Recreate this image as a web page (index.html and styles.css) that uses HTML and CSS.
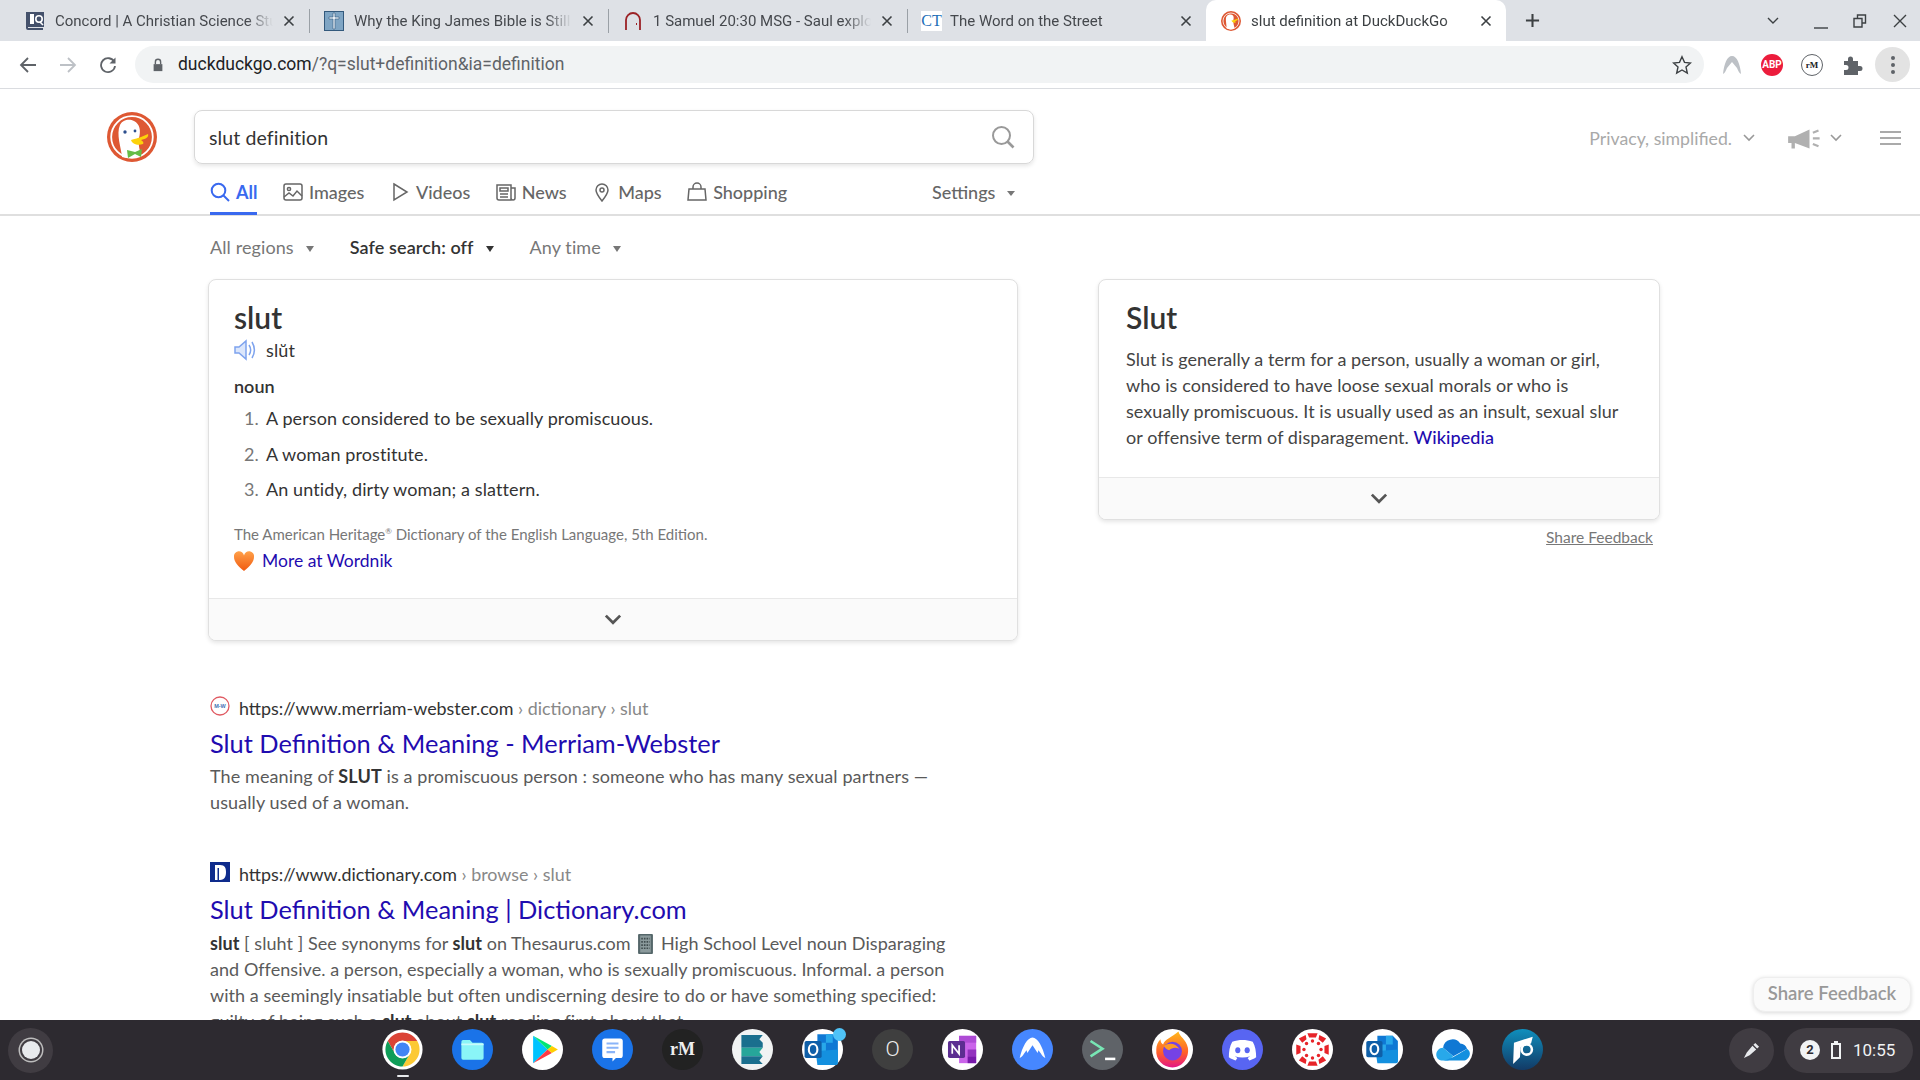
FILE: index.html
```html
<!DOCTYPE html>
<html lang="en">
<head>
<meta charset="utf-8">
<title>slut definition at DuckDuckGo</title>
<link rel="stylesheet" href="styles.css">
</head>
<body>
<div class="screen">
  <header class="chrome">
    <div class="tabstrip">
      <div class="tab">
        <svg class="favicon" viewBox="0 0 20 20"><path d="M1 1h2v16h15v2H3a2 2 0 0 1-2-2z" fill="#44516b"/><rect x="3" y="1" width="16" height="15" fill="#44516b"/><rect x="5" y="3" width="4" height="10" fill="#fff"/><circle cx="14" cy="8" r="3.200" fill="none" stroke="#fff" stroke-width="1.600"/><path d="M15 11l3 3" stroke="#fff" stroke-width="1.600"/></svg>
        <span class="tab-title">Concord | A Christian Science Study Tool</span>
        <svg class="tab-close" viewBox="0 0 12 12"><path d="M1.500 1.500l9 9M10.500 1.500l-9 9"/></svg>
      </div>
      <div class="tab sep">
        <svg class="favicon" viewBox="0 0 20 20"><rect x="0.500" y="0.500" width="19" height="19" fill="#7fa5c4" stroke="#33597c"/><path d="M9 2h2v4h4v2h-4v10H9V8H5V6h4z" fill="#e6eef5" stroke="#33597c" stroke-width=".6"/></svg>
        <span class="tab-title">Why the King James Bible is Still the Best</span>
        <svg class="tab-close" viewBox="0 0 12 12"><path d="M1.500 1.500l9 9M10.500 1.500l-9 9"/></svg>
      </div>
      <div class="tab sep">
        <svg class="favicon" viewBox="0 0 20 20"><path d="M3 19V9a7 7 0 0 1 14 0v10" fill="none" stroke="#9b2226" stroke-width="1.800"/><path d="M13.500 12v2" stroke="#9b2226"/></svg>
        <span class="tab-title">1 Samuel 20:30 MSG - Saul exploded at Jonathan</span>
        <svg class="tab-close" viewBox="0 0 12 12"><path d="M1.500 1.500l9 9M10.500 1.500l-9 9"/></svg>
      </div>
      <div class="tab sep">
        <span class="favicon ct">CT</span>
        <span class="tab-title">The Word on the Street</span>
        <svg class="tab-close" viewBox="0 0 12 12"><path d="M1.500 1.500l9 9M10.500 1.500l-9 9"/></svg>
      </div>
      <div class="tab active">
        <svg class="favicon" viewBox="0 0 50 50"><circle cx="25" cy="25" r="25" fill="#de5833"/><circle cx="25" cy="25" r="20" fill="none" stroke="#fff" stroke-width="2"/><path d="M14 44C14 30 10 20 14 13c3-5 12-6 16-2 2 3 2 7 1 11-1 8 2 16 3 21a22 22 0 0 1-20 1z" fill="#fff"/><path d="M26 24c6-1 10-2 16-5 1 3-2 6-7 7 2 1 3 3 2 3-4 1-9 0-11-5z" fill="#fdd20a"/></svg>
        <span class="tab-title">slut definition at DuckDuckGo</span>
        <svg class="tab-close" viewBox="0 0 12 12"><path d="M1.500 1.500l9 9M10.500 1.500l-9 9"/></svg>
      </div>
      <svg class="newtab" viewBox="0 0 16 16"><path d="M8 1v14M1 8h14"/></svg>
      <div class="winctl">
        <svg class="win-ico win-chev" viewBox="0 0 12 8"><path d="M1 1l5 5 5-5"/></svg>
        <svg class="win-ico win-min" viewBox="0 0 14 14"><path d="M0 12h14"/></svg>
        <svg class="win-ico win-max" viewBox="0 0 14 14"><path d="M4.500 4V1h8v8h-3M1 4.500h8V13H1z"/></svg>
        <svg class="win-ico win-x" viewBox="0 0 14 14"><path d="M1 1l12 12M13 1L1 13"/></svg>
      </div>
    </div>
    <div class="toolbar">
      <svg class="nav-ico" viewBox="0 0 18 18"><path d="M17 9H2M9 2L2 9l7 7"/></svg>
      <svg class="nav-ico disabled" viewBox="0 0 18 18"><path d="M1 9h15M9 2l7 7-7 7"/></svg>
      <svg class="nav-ico" viewBox="0 0 18 18"><path d="M15.300 6A7 7 0 1 0 16 10"/><path class="solid" d="M16.500 1.500v6h-6z"/></svg>
      <div class="omnibox">
        <svg class="lock" viewBox="0 0 12 16"><path d="M1 7h10v8H1z" fill="#5f6368"/><path d="M3 7V4.500a3 3 0 0 1 6 0V7" fill="none" stroke="#5f6368" stroke-width="1.600"/></svg>
        <span class="url"><span class="host">duckduckgo.com</span>/?q=slut+definition&amp;ia=definition</span>
        <svg class="star" viewBox="0 0 20 20"><path d="M10 1.800l2.500 5.600 6 .6-4.500 4 1.300 6L10 15l-5.300 3 1.300-6-4.500-4 6-.6z"/></svg>
      </div>
      <div class="extensions">
        <svg class="ext" viewBox="0 0 22 22"><path d="M2 20C3 10 6 2 11 2s8 8 9 18c-2-1-3-4-4-6l-5-6-5 6c-1 2-2 5-4 6z" fill="#bdc1c6"/></svg>
        <span class="ext abp">ABP</span>
        <span class="ext rm-badge">rM</span>
        <svg class="ext" viewBox="0 0 22 22"><path d="M3 7h4V5a2.500 2.500 0 0 1 5 0v2h5v5h2a2.500 2.500 0 0 1 0 5h-2v4H3v-5h2a2.500 2.500 0 0 0 0-5H3z" fill="#5f6368"/></svg>
        <span class="kebab"><i></i><i></i><i></i></span>
      </div>
    </div>
  </header>

  <main class="page">
    <div class="search-head">
      <svg class="logo" viewBox="0 0 50 50"><circle cx="25" cy="25" r="25" fill="#de5833"/><circle cx="25" cy="25" r="20.800" fill="none" stroke="#fff" stroke-width="1.800"/><path d="M15 45C14 35 9 22 13 13c3-6 10-6 14-4 6 3 7 10 5 17-1 7 1 13 2 17-6 3-13 4-19 2z" fill="#fff"/><circle cx="18" cy="20" r="1.700" fill="#2d4f8e"/><circle cx="28" cy="19" r="1.400" fill="#2d4f8e"/><path d="M24 28c4-1 11-3 17-6 1 3-2 5-7 6 2 1 3 3 2 4-5 2-11 0-12-4z" fill="#fdd20a"/><path d="M20 38l8 2 7-3-1 8-6-3-7 4z" fill="#65bc46"/></svg>
      <div class="searchbox">
        <span class="query">slut definition</span>
        <svg class="search-ico" viewBox="0 0 24 24"><circle cx="10.500" cy="10.500" r="8.500"/><path d="M16.500 16.500l6 6" stroke-width="2.600"/></svg>
      </div>
      <div class="head-right">
        <span class="tagline">Privacy, simplified.</span>
        <svg class="mini-chev" viewBox="0 0 12 8"><path d="M1 1l5 5 5-5"/></svg>
        <svg class="megaphone" viewBox="0 0 32 20"><path d="M1 7h6l13-6v17L7 13v5H4v-5H1z" fill="#b0b0b0"/><path d="M23 4l5-2M23 9h6M23 14l5 2" stroke="#b0b0b0" stroke-width="2"/></svg>
        <svg class="mini-chev" viewBox="0 0 12 8"><path d="M1 1l5 5 5-5"/></svg>
        <span class="burger"><i></i><i></i><i></i></span>
      </div>
    </div>

    <nav class="tabs-nav">
      <a class="nav-item current">
        <svg class="nav-svg" viewBox="0 0 20 20"><circle cx="8.500" cy="8.500" r="6.800"/><path d="M13.500 13.500l5.500 5.500"/></svg>All
      </a>
      <a class="nav-item">
        <svg class="nav-svg" viewBox="0 0 20 20"><rect x="1" y="2" width="18" height="16" rx="2"/><circle cx="6" cy="7" r="1.600"/><path d="M1 15l5-4 4 3 4-5 5 5"/></svg>Images
      </a>
      <a class="nav-item">
        <svg class="nav-svg" viewBox="0 0 20 20"><path d="M4 2l13 8-13 8z"/></svg>Videos
      </a>
      <a class="nav-item">
        <svg class="nav-svg" viewBox="0 0 20 20"><path d="M1 3h14v15H3a2 2 0 0 1-2-2zM15 6h4v10a2 2 0 0 1-4 0M4 6h8v3H4zM4 12h8M4 15h8"/></svg>News
      </a>
      <a class="nav-item">
        <svg class="nav-svg" viewBox="0 0 20 20"><path d="M10 19C6 14 4 11 4 8a6 6 0 0 1 12 0c0 3-2 6-6 11z"/><circle cx="10" cy="8" r="2"/></svg>Maps
      </a>
      <a class="nav-item">
        <svg class="nav-svg" viewBox="0 0 20 20"><path d="M2 7h16l1 11H1zM6 7V5a4 4 0 0 1 8 0v2"/></svg>Shopping
      </a>
      <a class="nav-item settings">Settings<span class="caret small"></span></a>
    </nav>

    <div class="filters">
      <span class="filter">All regions<span class="caret"></span></span>
      <span class="filter strong">Safe search: off<span class="caret dark"></span></span>
      <span class="filter">Any time<span class="caret"></span></span>
    </div>

    <div class="columns">
      <div class="col-main">
        <section class="card dict-card">
          <div class="card-body dict-body">
            <h1 class="card-title">slut</h1>
            <div class="pron">
              <svg class="speaker" viewBox="0 0 22 22"><path d="M1 8h4l7-6v18l-7-6H1z" fill="#dbe6fb" stroke="#7ea3ee" stroke-width="1.500"/><path d="M15 6c2 3 2 7 0 10M18 3c3 5 3 11 0 16" fill="none" stroke="#7ea3ee" stroke-width="1.500"/></svg>
              <span>slŭt</span>
            </div>
            <div class="pos">noun</div>
            <ol class="defs">
              <li><span class="num">1.</span><span>A person considered to be sexually promiscuous.</span></li>
              <li><span class="num">2.</span><span>A woman prostitute.</span></li>
              <li><span class="num">3.</span><span>An untidy, dirty woman; a slattern.</span></li>
            </ol>
            <p class="attrib">The American Heritage<sup>®</sup> Dictionary of the English Language, 5th Edition.</p>
            <div class="more">
              <svg class="heart" viewBox="0 0 20 20"><defs><linearGradient id="hg" x1="0" y1="0" x2="0" y2="1"><stop offset="0" stop-color="#ffa14a"/><stop offset="1" stop-color="#f05a10"/></linearGradient></defs><path d="M10 20C4 15 0 11 0 6a5 5 0 0 1 10-1.500A5 5 0 0 1 20 6c0 5-4 9-10 14z" fill="url(#hg)"/></svg>
              <a class="link">More at Wordnik</a>
            </div>
          </div>
          <div class="card-foot"><svg class="foot-chev" viewBox="0 0 16 10"><path d="M1.500 1.500L8 8l6.500-6.500"/></svg></div>
        </section>

        <article class="result first">
          <div class="res-url">
            <svg class="res-fav" viewBox="0 0 20 20"><circle cx="10" cy="10" r="9" fill="#fff" stroke="#e05a62" stroke-width="1.300"/><text x="10" y="12" class="mw-text">M-W</text></svg>
            <span class="url-host">https://www.merriam-webster.com</span><span class="crumbs"> › dictionary › slut</span>
          </div>
          <a class="res-title">Slut Definition &amp; Meaning - Merriam-Webster</a>
          <p class="snippet">The meaning of <b>SLUT</b> is a promiscuous person : someone who has many sexual partners — usually used of a woman.</p>
        </article>

        <article class="result">
          <div class="res-url">
            <svg class="res-fav" viewBox="0 0 20 20"><rect width="20" height="20" fill="#0e2b8c"/><path d="M5 3h5c5 0 6 3 6 7s-1 8-6 8H9V6H5z" fill="#fff"/><rect x="5" y="3" width="2.500" height="15" fill="#fff"/></svg>
            <span class="url-host">https://www.dictionary.com</span><span class="crumbs"> › browse › slut</span>
          </div>
          <a class="res-title">Slut Definition &amp; Meaning | Dictionary.com</a>
          <p class="snippet tight"><b>slut</b> [ sluht ] See synonyms for <b>slut</b> on Thesaurus.com <svg class="notebook" viewBox="0 0 16 20"><rect x="1" y="0.500" width="14" height="19" rx="1" fill="#55676a"/><rect x="3" y="2" width="10" height="16" fill="#8b9a9c"/><path d="M4 5h8M4 8h8M4 11h8M4 14h8" stroke="#3f4b4d" stroke-width="1.600" stroke-dasharray="1.500 1"/></svg> High School Level noun Disparaging and Offensive. a person, especially a woman, who is sexually promiscuous. Informal. a person with a seemingly insatiable but often undiscerning desire to do or have something specified: guilty of being such a <b>slut</b> about <b>slut</b> reading first about that.</p>
        </article>
      </div>

      <aside class="col-side">
        <section class="card wiki-card">
          <div class="card-body wiki-body">
            <h2 class="card-title">Slut</h2>
            <p class="wiki-text">Slut is generally a term for a person, usually a woman or girl, who is considered to have loose sexual morals or who is sexually promiscuous. It is usually used as an insult, sexual slur or offensive term of disparagement. <a class="link medium">Wikipedia</a></p>
          </div>
          <div class="card-foot"><svg class="foot-chev" viewBox="0 0 16 10"><path d="M1.500 1.500L8 8l6.500-6.500"/></svg></div>
        </section>
        <a class="share-link">Share Feedback</a>
      </aside>
    </div>

    <button class="share-btn">Share Feedback</button>
  </main>

  <footer class="shelf">
    <span class="launcher"><i></i></span>
    <div class="apps">
      <span class="app-wrap running">
        <svg class="app" viewBox="0 0 48 48"><circle cx="24" cy="24" r="23.500" fill="#fff"/><path d="M24 14h17.300A20 20 0 0 0 6.700 14l8.640 15A10 10 0 0 1 24 14z" fill="#db4437"/><path d="M41.300 14H24a10 10 0 0 1 8.660 15L24 44a20 20 0 0 0 17.300-30z" fill="#fcc934"/><path d="M6.700 14l8.640 15a10 10 0 0 0 17.320 0L24 44A20 20 0 0 1 6.700 14z" fill="#0f9d58"/><circle cx="24" cy="24" r="10.500" fill="#fff"/><circle cx="24" cy="24" r="8.300" fill="#4285f4"/></svg>
      </span>
      <svg class="app" viewBox="0 0 48 48"><circle cx="24" cy="24" r="24" fill="#1a73e8"/><path d="M11 15a2 2 0 0 1 2-2h8l3 3h11a2 2 0 0 1 2 2v16a2 2 0 0 1-2 2H13a2 2 0 0 1-2-2z" fill="#8af5f7"/><path d="M11 17h26v2H11z" fill="#c8fbfb"/></svg>
      <svg class="app" viewBox="0 0 48 48"><circle cx="24" cy="24" r="24" fill="#fff"/><path d="M13 8l17 16-17 16z" fill="#00c3ff"/><path d="M13 8l22 12-5 4z" fill="#00e676"/><path d="M13 40l22-12-5-4z" fill="#ff3a44"/><path d="M35 20l7 4-7 4-5-4z" fill="#ffce00"/></svg>
      <svg class="app" viewBox="0 0 48 48"><circle cx="24" cy="24" r="24" fill="#1a73e8"/><path d="M12 14a3 3 0 0 1 3-3h18a3 3 0 0 1 3 3v17a3 3 0 0 1-3 3h-5l-4 4v-4h-9a3 3 0 0 1-3-3z" fill="#fff"/><path d="M17 17h14M17 22h14M17 27h10" stroke="#8ab4f8" stroke-width="2.500"/></svg>
      <span class="app app-rm">rM</span>
      <svg class="app" viewBox="0 0 48 48"><circle cx="24" cy="24" r="24" fill="#f1f3f3"/><path d="M11 7h25l-4 5 4 4v6H11z" fill="#1a6f8e"/><path d="M11 22h25l-4 5 4 5H11z" fill="#26a69a"/><path d="M11 32h25l-4 5 4 4H11z" fill="#1a6f8e"/></svg>
      <span class="app-wrap">
        <svg class="app" viewBox="0 0 48 48"><circle cx="24" cy="24" r="24" fill="#fff"/><path d="M18 6h18l6 6v26H18z" fill="#0f78d4"/><path d="M28 6h8v10h-8zM18 16h10v10H18z" fill="#28a8ea"/><path d="M16 26l26-2v16a2 2 0 0 1-2 2H18z" fill="#1490df"/><rect x="3" y="14" width="20" height="20" rx="2" fill="#0f5fa8"/><ellipse cx="13" cy="24" rx="5" ry="6.500" fill="none" stroke="#fff" stroke-width="2.500"/></svg>
        <i class="notify"></i>
      </span>
      <span class="app app-o">O</span>
      <svg class="app" viewBox="0 0 48 48"><circle cx="24" cy="24" r="24" fill="#fff"/><path d="M20 8h20v32H20z" fill="#ca64ea"/><path d="M20 8h20v8H20z" fill="#ae4bd5"/><path d="M30 24h10v8H30z" fill="#9332bf"/><path d="M30 32h10v8H30z" fill="#7719aa"/><rect x="7" y="14" width="20" height="20" rx="2" fill="#5c2d91"/><path d="M12 29V19l8 10V19" fill="none" stroke="#fff" stroke-width="2"/></svg>
      <svg class="app" viewBox="0 0 48 48"><circle cx="24" cy="24" r="24" fill="#4687ff"/><path d="M9 34C12 21 18 10 24 10s12 11 15 24c-2-1-4-3-5-5l-3-4-1 3-6-9-6 9-1-3-3 4c-1 2-3 4-5 5z" fill="#fff"/></svg>
      <svg class="app" viewBox="0 0 48 48"><circle cx="24" cy="24" r="24" fill="#5f6368"/><path d="M10 14l14 9-14 9" fill="none" stroke="#78e6b4" stroke-width="3"/><path d="M27 35h12" stroke="#fff" stroke-width="3"/></svg>
      <svg class="app" viewBox="0 0 48 48"><defs><linearGradient id="ffg" x1="0" y1="0" x2="0" y2="1"><stop offset="0" stop-color="#ffb81c"/><stop offset="0.600" stop-color="#ff5d2a"/><stop offset="1" stop-color="#e31587"/></linearGradient></defs><circle cx="24" cy="24" r="24" fill="#fff"/><path d="M31 3c1 6 9 9 11 19 2 12-7 23-18 23S4 36 5 24c0-5 2-9 5-12 0 3 1 5 3 6 2-6 10-8 18-15z" fill="url(#ffg)"/><circle cx="24" cy="26" r="11" fill="#7542e5"/><path d="M14 20c6-5 14-3 18 3-5-2-9-1-12 2-3-1-5-3-6-5z" fill="#ff9a26"/></svg>
      <svg class="app" viewBox="0 0 48 48"><circle cx="24" cy="24" r="24" fill="#5865f2"/><path d="M12 15c8-3 16-3 24 0 3 5 4 12 4 18-3 2-6 3-8 4l-2-3 3-2c-6 2-12 2-18 0l3 2-2 3c-2-1-5-2-8-4 0-6 1-13 4-18z" fill="#fff"/><ellipse cx="18.500" cy="25" rx="3" ry="3.500" fill="#5865f2"/><ellipse cx="29.500" cy="25" rx="3" ry="3.500" fill="#5865f2"/></svg>
      <svg class="app canvas" viewBox="0 0 48 48"><circle cx="24" cy="24" r="24" fill="#fff"/><g fill="#e72429"><circle cx="24" cy="14" r="2"/><circle cx="24" cy="34" r="2"/><circle cx="14" cy="24" r="2"/><circle cx="34" cy="24" r="2"/><circle cx="17" cy="17" r="2"/><circle cx="31" cy="17" r="2"/><circle cx="17" cy="31" r="2"/><circle cx="31" cy="31" r="2"/><path d="M18 5h12l-2 5h-8zM18 43h12l-2-5h-8zM5 18v12l5-2v-8zM43 18v12l-5-2v-8zM8 11l8-4 1 5-5 4zM40 11l-8-4-1 5 5 4zM8 37l8 4 1-5-5-4zM40 37l-8 4-1-5 5-4z"/></g></svg>
      <svg class="app" viewBox="0 0 48 48"><circle cx="24" cy="24" r="24" fill="#fff"/><path d="M18 8h18l6 6v24H18z" fill="#0f78d4"/><path d="M28 8h8v10h-8zM18 18h10v8H18z" fill="#28a8ea"/><path d="M16 26l26-2v14a2 2 0 0 1-2 2H18z" fill="#1490df"/><rect x="5" y="14" width="19" height="19" rx="2" fill="#0f5fa8"/><ellipse cx="14.500" cy="23.500" rx="4.500" ry="6" fill="none" stroke="#fff" stroke-width="2.500"/></svg>
      <svg class="app" viewBox="0 0 48 48"><circle cx="24" cy="24" r="24" fill="#fff"/><path d="M13 22a11 11 0 0 1 20-5 9 9 0 0 1 8 6l-16 9z" fill="#0f78d4"/><path d="M13 22c-5 0-8 4-8 8 0 4 3 7 8 7h6l6-5z" fill="#28a8ea"/><path d="M41 23c3 2 4 5 3 8s-4 6-7 6H13c12-3 20-9 28-14z" fill="#1490df"/></svg>
      <svg class="app" viewBox="0 0 48 48"><defs><linearGradient id="lg" x1="0" y1="0" x2="0" y2="1"><stop offset="0" stop-color="#0f8fbd"/><stop offset="1" stop-color="#123a66"/></linearGradient></defs><circle cx="24" cy="24" r="24" fill="url(#lg)"/><path d="M13 41l1-25 22-7-2 8-12 4-1 12z" fill="#fff"/><circle cx="29" cy="24" r="6" fill="none" stroke="#fff" stroke-width="3"/></svg>
    </div>
    <div class="status">
      <span class="pen-pill"><svg class="pen" viewBox="0 0 18 18"><path d="M1 17l3-6 6-7 4 4-7 6zM11 3l2-2 4 4-2 2z" fill="#e8eaed"/></svg></span>
      <span class="tray">
        <span class="badge">2</span>
        <svg class="battery" viewBox="0 0 10 18"><path d="M3 0h4v2h3v16H0V2h3zM2 4v12h6V4z" fill="#f1f3f4"/></svg>
        <span class="clock">10:55</span>
      </span>
    </div>
  </footer>
</div>
</body>
</html>
```

FILE: styles.css
```css
* { box-sizing: border-box; }
html, body { margin: 0; height: 100%; background: #fff; }
.screen { width: 1920px; height: 1080px; display: flex; flex-direction: column; overflow: hidden; font-family: "Lato", "Liberation Sans", sans-serif; color: #333; }

/* browser chrome */
.chrome { flex: 0 0 89px; display: flex; flex-direction: column; font-family: Roboto, "Liberation Sans", sans-serif; border-bottom: 1px solid #dadce0; }
.tabstrip { height: 41px; background: #dee1e6; display: flex; align-items: center; padding-left: 10px; }
.tab { width: 299px; height: 41px; display: flex; align-items: center; padding: 0 14px 0 15px; gap: 10px; position: relative; color: #45484d; font-size: 15px; }
.tab.sep::before { content: ""; position: absolute; left: 0; top: 9px; height: 24px; width: 1px; background: #9aa0a6; }
.tab.active { background: #fff; border-radius: 10px 10px 0 0; color: #3c4043; width: 300px; }
.favicon { width: 20px; height: 20px; flex: none; }
.ct { display: block; background: #fff; color: #1e6fb8; font: 400 16px/20px "Liberation Serif", serif; text-align: center; margin: 0 -2px 0 -1px; width: 21px; }
.tab-title { flex: 1; white-space: nowrap; overflow: hidden; -webkit-mask-image: linear-gradient(90deg, #000 88%, transparent 100%); mask-image: linear-gradient(90deg, #000 88%, transparent 100%); }
.tab-close { width: 12px; height: 12px; flex: none; stroke: #3c4043; stroke-width: 1.600; fill: none; }
.newtab { width: 15px; height: 15px; margin-left: 19px; stroke: #3c4043; stroke-width: 2.200; fill: none; flex: none; }
.winctl { margin-left: auto; display: flex; align-items: center; padding-right: 13px; }
.win-ico { stroke: #3c4043; fill: none; stroke-width: 1.400; flex: none; }
.win-chev { width: 12px; height: 8px; margin-right: 35px; }
.win-min { width: 14px; height: 14px; margin-right: 25px; margin-top: 4px; }
.win-max { width: 14px; height: 14px; margin-right: 26px; }
.win-x { width: 14px; height: 14px; }

.toolbar { height: 47px; background: #fff; display: flex; align-items: center; padding: 0 10px 0 19px; }
.nav-ico { width: 18px; height: 18px; stroke: #5f6368; stroke-width: 1.800; fill: none; flex: none; margin-right: 22px; }
.nav-ico .solid { fill: #5f6368; stroke: none; }
.nav-ico.disabled { stroke: #bdc1c6; }
.omnibox { width: 1571px; height: 37px; margin: 5px 0 5px -4px; background: #f1f3f4; border-radius: 19px; display: flex; align-items: center; padding: 0 12px 0 17px; }
.lock { width: 12px; height: 14px; flex: none; margin-right: 14px; }
.url { flex: 1; font-size: 17.500px; color: #5f6368; white-space: nowrap; padding-bottom: 2px; }
.host { color: #202124; }
.star { width: 20px; height: 20px; fill: none; stroke: #3c4043; stroke-width: 1.400; flex: none; }
.extensions { display: flex; align-items: center; margin-left: 17px; gap: 18px; }
.ext { width: 22px; height: 22px; flex: none; }
.abp { background: #ec1c3c; color: #fff; font-size: 10px; font-weight: 700; line-height: 22px; text-align: center; border-radius: 50%; }
.rm-badge { border: 1px solid #5f6368; border-radius: 50%; font: 700 9px/20px "Liberation Serif", serif; color: #202124; text-align: center; background: #fff; }
.kebab { width: 35px; height: 35px; border-radius: 50%; background: #e3e3e3; display: flex; flex-direction: column; align-items: center; justify-content: center; gap: 3px; margin-left: -6px; }
.kebab i { width: 4px; height: 4px; border-radius: 50%; background: #5f6368; }

/* page */
.page { flex: 1; position: relative; overflow: hidden; background: #fff; min-height: 0; }
.search-head { display: flex; align-items: center; height: 54px; margin-top: 21px; padding-left: 107px; }
.logo { width: 50px; height: 50px; flex: none; margin-right: 37px; }
.searchbox { width: 840px; height: 54px; border: 1px solid #d8d8d8; border-radius: 8px; box-shadow: 0 2px 4px rgba(0,0,0,.1); display: flex; align-items: center; padding: 0 18px 0 14px; justify-content: space-between; }
.query { font-size: 19.500px; letter-spacing: .1px; color: #333; }
.search-ico { width: 24px; height: 24px; fill: none; stroke: #999; stroke-width: 2; }
.head-right { margin-left: auto; margin-top: 2px; padding-right: 19px; display: flex; align-items: center; color: #a9a9a9; }
.tagline { font-size: 17.700px; margin-right: 11px; }
.mini-chev { width: 12px; height: 8px; fill: none; stroke: #999; stroke-width: 1.600; flex: none; }
.megaphone { width: 36px; height: 23px; margin: 2px 7px 0 32px; flex: none; }
.burger { display: flex; flex-direction: column; gap: 4px; margin-left: 38px; }
.burger i { display: block; width: 21px; height: 2px; background: #aaa; }

.tabs-nav { height: 52px; border-bottom: 2px solid #dfdfdf; display: flex; align-items: center; padding-left: 210px; gap: 25.500px; position: relative; }
.tabs-nav .nav-item { height: 50px; padding-top: 5px; display: flex; align-items: center; gap: 6px; font-size: 18px; font-weight: 500; color: #666; position: relative; }
.nav-svg { width: 20px; height: 20px; fill: none; stroke: #666; stroke-width: 1.500; flex: none; }
.tabs-nav .nav-item.current { color: #3969ef; font-weight: 700; }
.nav-item.current .nav-svg { stroke: #3969ef; stroke-width: 2; }
.nav-item.current::after { content: ""; position: absolute; left: 0; right: 0; bottom: -1px; height: 3px; background: #3969ef; }
.nav-item.settings { position: absolute; left: 932px; gap: 0; }
.caret { display: inline-block; width: 0; height: 0; border-left: 4.500px solid transparent; border-right: 4.500px solid transparent; border-top: 6px solid #777; margin-left: 12px; vertical-align: 2px; }
.caret.small { border-left-width: 4px; border-right-width: 4px; border-top-width: 5px; margin-top: 4px; }
.caret.dark { border-top-color: #333; }

.filters { height: 63px; display: flex; align-items: center; padding-left: 210px; gap: 36px; padding-bottom: 1px; }
.filter { font-size: 18px; letter-spacing: .1px; color: #777; }
.filter.strong { color: #333; font-weight: 600; }

.columns { display: flex; padding-left: 208px; align-items: flex-start; }
.col-main { width: 810px; flex: none; }
.col-side { width: 562px; margin-left: 80px; flex: none; display: flex; flex-direction: column; }
.card { border: 1px solid #e0e0e0; border-radius: 8px; box-shadow: 0 2px 4px rgba(0,0,0,.1); background: #fff; overflow: hidden; }
.card-foot { height: 42px; border-top: 1px solid #e8e8e8; background: #fafafa; display: flex; align-items: center; justify-content: center; }
.foot-chev { width: 18px; height: 11px; fill: none; stroke: #555; stroke-width: 2.500; }
.card-title { margin: 0 0 -1px; font-size: 30px; line-height: 33px; font-weight: 600; color: #333; padding-top: 0; }
.dict-body { padding: 21px 25px 0; height: 318px; }
.pron { display: flex; align-items: center; gap: 10px; font-size: 18px; letter-spacing: .1px; margin-top: 6px; height: 22px; }
.speaker { width: 22px; height: 24px; flex: none; }
.pos { font-size: 18px; font-weight: 600; margin-top: 13px; line-height: 24px; }
.defs { list-style: none; margin: 8px 0 0; padding: 0 0 0 10px; font-size: 18px; letter-spacing: .1px; }
.defs li { display: flex; line-height: 24px; margin-bottom: 11.500px; }
.num { width: 22px; color: #777; flex: none; }
.attrib { margin: 20px 0 0; font-size: 15px; line-height: 20px; color: #777; }
.attrib sup { font-size: 8px; }
.more { display: flex; align-items: center; gap: 8px; margin-top: 6px; font-size: 17.500px; }
.heart { width: 20px; height: 20px; flex: none; }
.link { color: #1f0cb0; }
.link.medium { font-weight: 500; }

.result { width: 745px; margin-left: 2px; }
.result.first { margin-top: 55px; }
.result + .result { margin-top: 47px; }
.res-url { display: flex; align-items: center; height: 24px; font-size: 17.900px; white-space: pre; }
.res-fav { width: 20px; height: 20px; flex: none; margin: -5px 9px 0 0; }
.mw-text { font: 700 5.500px "Liberation Sans", sans-serif; fill: #3f72b5; text-anchor: middle; }
.url-host { color: #333; }
.crumbs { color: #888; }
.res-title { display: block; font-size: 25.400px; line-height: 34px; margin-top: 6px; color: #1f0cb0; }
.snippet { margin: 3px 0 0; font-size: 18px; letter-spacing: .1px; line-height: 26px; color: #5a5a5a; }
.snippet.tight { letter-spacing: .05px; margin-top: 4px; }
.snippet b { color: #333; }
.notebook { width: 17px; height: 22px; vertical-align: -5px; margin: 0 2px; }

.wiki-body { padding: 21px 27px 0; height: 197px; }
.wiki-text { margin: 13px 0 0; font-size: 18px; letter-spacing: .06px; line-height: 26px; color: #444; }
.share-link { align-self: flex-end; margin: 7px 7px 0 0; font-size: 15.500px; color: #777; text-decoration: underline; line-height: 20px; }
.share-btn { position: absolute; left: 1753px; top: 888px; width: 158px; height: 35px; border: 1px solid #eee; border-radius: 12px; background: #fafafa; box-shadow: 0 1px 4px rgba(0,0,0,.15); font: 600 18.500px "Lato", sans-serif; color: #999; padding: 0 0 3px; }

/* shelf */
.shelf { flex: 0 0 60px; background: #2d2a30; display: flex; align-items: center; position: relative; }
.launcher { width: 45px; height: 45px; margin-left: 8px; border-radius: 50%; background: #403c42; display: flex; align-items: center; justify-content: center; flex: none; }
.launcher i { width: 18px; height: 18px; border-radius: 50%; background: #e8eaed; box-shadow: 0 0 0 2px #403c42, 0 0 0 3.500px #bdbdbd; }
.apps { display: flex; align-items: center; gap: 29px; margin: -2px 0 0 329px; }
.app { width: 41px; height: 41px; flex: none; display: block; }
.app-wrap { position: relative; display: block; width: 41px; height: 41px; flex: none; }
.app-wrap.running::after { content: ""; position: absolute; left: 15px; bottom: -7px; width: 12px; height: 2px; border-radius: 1px; background: #e8eaed; }
.notify { position: absolute; right: -3px; top: -1px; width: 13px; height: 13px; border-radius: 50%; background: #4fc3f7; }
.app-rm { border-radius: 50%; background: #222; color: #eee; font: 700 18px/41px "Liberation Serif", serif; text-align: center; }
.app-o { border-radius: 50%; background: #3f3f3f; color: #eee; font: 300 21px/41px Roboto, sans-serif; text-align: center; }
.status { margin-left: auto; display: flex; align-items: center; gap: 10px; padding-right: 7px; font-family: Roboto, sans-serif; }
.pen-pill { width: 45px; height: 45px; border-radius: 50%; background: #403c42; display: flex; align-items: center; justify-content: center; }
.pen { width: 17px; height: 17px; }
.tray { width: 129px; height: 45px; border-radius: 23px; background: #403c42; display: flex; align-items: center; padding-left: 16px; color: #f1f3f4; }
.badge { width: 20px; height: 20px; border-radius: 50%; background: #f1f3f4; color: #2d2a30; font-size: 13px; font-weight: 700; line-height: 20px; text-align: center; flex: none; }
.battery { width: 10px; height: 18px; margin-left: 11px; flex: none; }
.clock { font-size: 17px; margin-left: 12px; }
```
